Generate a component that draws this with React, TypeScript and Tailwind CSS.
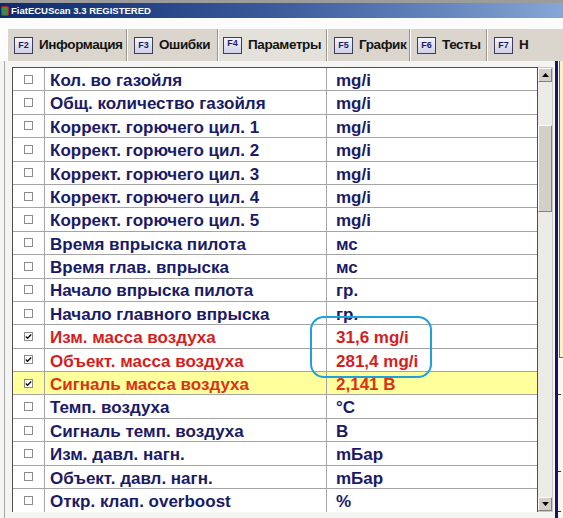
import React from 'react';

type Row = { name: string; unit: string; checked?: boolean; tone?: 'red' | 'hl' };

const rows: Row[] = [
  { name: 'Кол. во газойля', unit: 'mg/i' },
  { name: 'Общ. количество газойля', unit: 'mg/i' },
  { name: 'Коррект. горючего цил. 1', unit: 'mg/i' },
  { name: 'Коррект. горючего цил. 2', unit: 'mg/i' },
  { name: 'Коррект. горючего цил. 3', unit: 'mg/i' },
  { name: 'Коррект. горючего цил. 4', unit: 'mg/i' },
  { name: 'Коррект. горючего цил. 5', unit: 'mg/i' },
  { name: 'Время впрыска пилота', unit: 'мс' },
  { name: 'Время глав. впрыска', unit: 'мс' },
  { name: 'Начало впрыска пилота', unit: 'гр.' },
  { name: 'Начало главного впрыска', unit: 'гр.' },
  { name: 'Изм. масса воздуха', unit: '31,6 mg/i', checked: true, tone: 'red' },
  { name: 'Объект. масса воздуха', unit: '281,4 mg/i', checked: true, tone: 'red' },
  { name: 'Сигналь масса воздуха', unit: '2,141 В', checked: true, tone: 'hl' },
  { name: 'Темп. воздуха', unit: '°C' },
  { name: 'Сигналь темп. воздуха', unit: 'В' },
  { name: 'Изм. давл. нагн.', unit: 'mБар' },
  { name: 'Объект. давл. нагн.', unit: 'mБар' },
  { name: 'Откр. клап. overboost', unit: '%' },
];

const tabs = [
  { key: 'F2', label: 'Информация', w: 'w-[120px]' },
  { key: 'F3', label: 'Ошибки', w: 'w-[91px]' },
  { key: 'F4', label: 'Параметры', w: 'w-[109px]', active: true },
  { key: 'F5', label: 'График', w: 'w-[83px]' },
  { key: 'F6', label: 'Тесты', w: 'w-[77px]' },
  { key: 'F7', label: 'Н', w: 'w-[90px]' },
];

const CheckBox: React.FC<{ checked?: boolean }> = ({ checked }) => (
  <div className="w-[9px] h-[9px] border border-[#8c8c8c] bg-white flex items-center justify-center">
    {checked && (
      <svg width="7" height="7" viewBox="0 0 7 7">
        <path d="M0.8 3.4 L2.6 5.2 L6.2 1.4" stroke="#111" strokeWidth="1.4" fill="none" />
      </svg>
    )}
  </div>
);

const App: React.FC = () => {
  return (
    <div
      className="w-[563px] h-[518px] overflow-hidden relative bg-[#f4f4f2] flex flex-col"
      style={{ fontFamily: '"Liberation Sans", Arial, sans-serif' }}
    >
      {/* taskbar strip */}
      <div className="h-[3px] bg-[#9c9c9c]" />

      {/* title bar */}
      <div className="h-[15px] bg-gradient-to-r from-[#0c2a6c] via-[#3c5c9c] to-[#86a6d6] flex items-center">
        <div className="w-[8px] h-[10px] ml-[1px] bg-[#3a8a4a] rounded-[2px] border border-[#c02020]" />
        <span className="ml-[2px] text-white font-bold text-[9.5px] leading-none">
          FiatECUScan 3.3 REGISTERED
        </span>
      </div>

      <div className="h-[11px] bg-[#fcfcfc]" />

      {/* tabs */}
      <div className="h-[32px] bg-[#fcfcfc] flex pl-[7px]">
        {tabs.map((t) => (
          <div
            key={t.key}
            className={`${t.w} shrink-0 h-full flex items-center gap-[6px] pt-[1px] overflow-hidden border-r border-r-[#9a968e] border-l border-l-white ${
              t.active ? 'bg-[#e4e1da] pl-[4px]' : 'bg-[#dad6ce] pl-[6px]'
            }`}
          >
            <div
              className={`w-[19px] h-[17px] border border-[#3c3c5c] bg-gradient-to-b from-[#f4f4fc] to-[#d0d0e8] flex justify-center text-[#1a1a6a] font-bold text-[9px] leading-none shrink-0 ${
                t.active ? 'items-start pt-[1px]' : 'items-center'
              }`}
            >
              {t.key}
            </div>
            <span className="text-[13.5px] tracking-[-0.4px] font-bold text-[#141414] whitespace-nowrap">{t.label}</span>
          </div>
        ))}
      </div>

      {/* content panel */}
      <div className="flex-1 flex ml-[4px] border-l border-[#a8a8a8] pt-[6px] bg-[#f4f4f2]">
        <div className="pl-[7px] flex">
          {/* table */}
          <div className="w-[526px] h-[445px] border border-[#505050] bg-white flex flex-col">
            {rows.map((r, i) => {
              const bg = r.tone === 'hl' ? 'bg-[#ffff9c]' : 'bg-white';
              const color =
                r.tone === 'red' ? 'text-[#d41e1e]' : r.tone === 'hl' ? 'text-[#d83414]' : 'text-[#1a1a66]';
              return (
                <div
                  key={i}
                  className={`flex h-[23.4px] shrink-0 ${bg} ${i < rows.length - 1 ? 'border-b border-[#a4a4a4]' : ''}`}
                >
                  <div className="w-[32px] flex items-center justify-center border-r border-[#a4a4a4]">
                    <CheckBox checked={r.checked} />
                  </div>
                  <div className={`w-[282px] flex items-center pl-[5px] pt-[3px] border-r border-[#a4a4a4] text-[17px] font-bold ${color} whitespace-nowrap`}>
                    {r.name}
                  </div>
                  <div className={`flex-1 flex items-center pl-[9px] pt-[3px] text-[17px] font-bold ${color} whitespace-nowrap`}>
                    {r.unit}
                  </div>
                </div>
              );
            })}
          </div>

          {/* scrollbar */}
          <div className="w-[15px] h-[445px] bg-[#ecebe6] flex flex-col border-y border-r border-[#c8c8c8]">
            <div className="h-[14px] bg-[#d4d0c8] border border-t-white border-l-white border-r-[#808080] border-b-[#808080] flex items-center justify-center">
              <svg width="7" height="4" viewBox="0 0 7 4">
                <path d="M0 4 L3.5 0 L7 4 Z" fill="#000" />
              </svg>
            </div>
            <div className="h-[43px]" />
            <div className="h-[87px] bg-[#d4d0c8] border border-t-white border-l-white border-r-[#808080] border-b-[#808080]" />
            <div className="flex-1" />
            <div className="h-[14px] bg-[#d4d0c8] border border-t-white border-l-white border-r-[#808080] border-b-[#808080] flex items-center justify-center">
              <svg width="7" height="4" viewBox="0 0 7 4">
                <path d="M0 0 L3.5 4 L7 0 Z" fill="#000" />
              </svg>
            </div>
          </div>
        </div>

        {/* right edge panel */}
        <div className="w-[2px] -mt-[6px]" />
        <div className="w-[3px] -mt-[6px] bg-[#14146c]" />
        <div className="flex-1 -mt-[6px] flex flex-col bg-[#faf8ec]">
          <div className="h-[297px] ml-[1px] border-l border-b border-[#6c6c50] bg-[#f6f2c8]" />
          <div className="h-[36px]" />
          <div className="h-[1px] w-[3px] bg-[#303030]" />
          <div className="h-[76px]" />
          <div className="h-[1px] w-[3px] bg-[#303030]" />
          <div className="h-[39px]" />
          <div className="h-[1px] w-[3px] bg-[#303030]" />
        </div>
      </div>

      {/* annotation highlight */}
      <div className="absolute left-[310px] top-[316px] w-[122px] h-[62px] border-2 border-[#1ea0dc] rounded-[14px] pointer-events-none" />
    </div>
  );
};

export default App;
